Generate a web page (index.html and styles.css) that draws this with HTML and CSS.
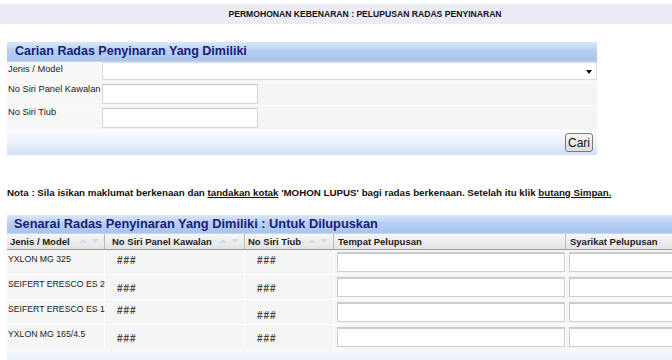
FILE: index.html
```html
<!DOCTYPE html>
<html>
<head>
<meta charset="utf-8">
<link rel="stylesheet" href="styles.css">
</head>
<body>
<div class="title-bar">PERMOHONAN KEBENARAN : PELUPUSAN RADAS PENYINARAN</div>

<section class="panel search">
  <div class="panel-head">Carian Radas Penyinaran Yang Dimiliki</div>
  <div class="form">
    <div class="frow r1">
      <label>Jenis / Model</label>
      <div class="select"><span class="caret"></span></div>
    </div>
    <div class="frow r2">
      <label>No Siri Panel Kawalan</label>
      <input class="tinput" type="text">
    </div>
    <div class="frow r3">
      <label>No Siri Tiub</label>
      <input class="tinput" type="text">
    </div>
  </div>
  <div class="panel-foot"><button class="btn">Cari</button></div>
</section>

<p class="note">Nota : Sila isikan maklumat berkenaan dan <u>tandakan kotak</u> 'MOHON LUPUS' bagi radas berkenaan. Setelah itu klik <u>butang Simpan.</u></p>

<section class="panel list">
  <div class="panel-head">Senarai Radas Penyinaran Yang Dimiliki : Untuk Dilupuskan</div>
  <div class="ghead">
    <div class="th th1">Jenis / Model <span class="sort"><i class="up"></i><i class="down"></i></span></div>
    <div class="th th2">No Siri Panel Kawalan <span class="sort"><i class="up"></i><i class="down"></i></span></div>
    <div class="th th3">No Siri Tiub <span class="sort"><i class="up"></i><i class="down"></i></span></div>
    <div class="th th4">Tempat Pelupusan</div>
    <div class="th th5">Syarikat Pelupusan</div>
  </div>
  <div class="gbody">
    <div class="td model">YXLON MG 325</div>
    <div class="td hash p5">###</div>
    <div class="td hash p5">###</div>
    <div class="td"><input class="cinput" type="text"></div>
    <div class="td"><input class="cinput" type="text"></div>

    <div class="td model">SEIFERT ERESCO ES 2</div>
    <div class="td hash p9">###</div>
    <div class="td hash p9">###</div>
    <div class="td"><input class="cinput" type="text"></div>
    <div class="td"><input class="cinput" type="text"></div>

    <div class="td model">SEIFERT ERESCO ES 1</div>
    <div class="td hash p5">###</div>
    <div class="td hash p10">###</div>
    <div class="td"><input class="cinput" type="text"></div>
    <div class="td"><input class="cinput" type="text"></div>

    <div class="td model">YXLON MG 165/4.5</div>
    <div class="td hash p8">###</div>
    <div class="td hash p9">###</div>
    <div class="td"><input class="cinput" type="text"></div>
    <div class="td"><input class="cinput" type="text"></div>
  </div>
  <div class="list-foot"></div>
</section>
</body>
</html>
```

FILE: styles.css
```css
html, body {
  margin: 0;
  padding: 0;
  background: #ffffff;
  overflow: hidden;
  width: 672px;
  height: 360px;
}
body {
  font-family: "Liberation Sans", Arial, sans-serif;
  font-size: 9.5px;
  line-height: 11px;
  color: #222;
}
.title-bar {
  margin-top: 4px;
  height: 20px;
  line-height: 20px;
  background: #ececf7;
  text-align: center;
  padding-left: 58px;
  font-weight: bold;
  font-size: 8.6px;
  color: #111;
}
.panel {
  margin-left: 7px;
}
.search {
  width: 590px;
  margin-top: 18px;
}
.panel-head {
  height: 19px;
  line-height: 19px;
  padding-left: 8px;
  font-weight: bold;
  font-size: 12.5px;
  color: #17207a;
  background: linear-gradient(#dbe7f8, #b8cff1 45%, #a9c5ee);
  border-bottom: 1px solid #c5d6ef;
}
.form {
  display: flex;
  flex-direction: column;
}
.frow {
  display: grid;
  grid-template-columns: 95px 1fr;
  align-items: start;
  background: #f5f5f5;
  border-bottom: 1px solid #fbfbfb;
}
.frow label {
  padding-left: 1px;
  white-space: nowrap;
  font-size: 9.3px;
  background: #f8f8f8;
  align-self: stretch;
}
.r1 { height: 20px; }
.r2 { height: 22px; }
.r3 { height: 23px; }
.r1 label { padding-top: 2px; }
.r2 label { padding-top: 1px; }
.r3 label { padding-top: 1px; }
.select {
  position: relative;
  height: 18px;
  box-sizing: border-box;
  background: #fff;
  border: 1px solid #dcdcdc;
}
.caret {
  position: absolute;
  right: 4px;
  top: 7px;
  width: 0;
  height: 0;
  border-left: 3px solid transparent;
  border-right: 3px solid transparent;
  border-top: 4px solid #111;
}
.tinput {
  display: block;
  margin: 1px 0 0 0;
  width: 156px;
  height: 20px;
  box-sizing: border-box;
  border: 1px solid #d6d6d6;
  border-top-color: #c8c8c8;
  background: #fff;
  padding: 0;
}
.r3 .tinput { margin-top: 2px; }
.panel-foot {
  height: 25px;
  display: flex;
  justify-content: flex-end;
  align-items: center;
  padding-right: 4px;
  background: linear-gradient(#fafcff, #e9f0fb 55%, #d0dff5);
}
.btn {
  font-family: "Liberation Sans", Arial, sans-serif;
  font-size: 12px;
  height: 19px;
  padding: 0 2px;
  color: #111;
  background: linear-gradient(#f6f6f6, #dedede);
  border: 1px solid #7a7a7a;
  border-radius: 3px;
}
.note {
  margin: 32px 0 0 7px;
  font-weight: bold;
  font-size: 9.75px;
  line-height: 11px;
  color: #111;
  white-space: nowrap;
}
.list {
  margin-top: 17px;
  width: 740px;
}
.list .panel-head {
  height: 18px;
  line-height: 18px;
  padding-left: 7px;
  font-size: 12.8px;
}
.ghead, .gbody {
  display: grid;
  grid-template-columns: 97px 139px 88px 231px 200px;
  column-gap: 1px;
}
.ghead {
  background: #bdbdbd;
  border-bottom: 1px solid #9d9d9d;
}
.th {
  position: relative;
  height: 15px;
  line-height: 15px;
  padding-left: 4px;
  font-weight: bold;
  font-size: 9.5px;
  color: #222;
  background: linear-gradient(#f8f8f8, #e3e3e3);
  white-space: nowrap;
}
.th1 { padding-left: 3px; }
.th2 { padding-left: 7px; }
.th3 { padding-left: 3px; }
.sort {
  position: absolute;
  right: 5px;
  top: 5px;
  display: flex;
  gap: 4px;
}
.sort i {
  display: block;
  width: 0;
  height: 0;
  border-left: 4px solid transparent;
  border-right: 4px solid transparent;
}
.sort .up { border-bottom: 4px solid #d3dbe8; }
.sort .down { border-top: 4px solid #d3dbe8; }
.gbody {
  grid-auto-rows: 24px;
  row-gap: 1px;
  background: #fdfdfd;
}
.td {
  background: #f5f5f5;
  overflow: hidden;
  color: #222;
}
.model {
  overflow: visible;
  padding: 4px 0 0 1px;
  font-size: 8.7px;
  white-space: nowrap;
}
.hash {
  font-weight: bold;
  font-size: 10px;
  color: #444;
  letter-spacing: 1px;
  padding-left: 12px;
}
.p5 { padding-top: 5px; }
.p8 { padding-top: 8px; }
.p9 { padding-top: 8px; }
.p10 { padding-top: 10px; }
.cinput {
  display: block;
  margin: 2px 0 0 3px;
  width: 228px;
  height: 20px;
  box-sizing: border-box;
  border: 1px solid #cfcfcf;
  border-top: 2px solid #cdcdcd;
  background: #fff;
  padding: 0;
}
.gbody .td:nth-child(5n) .cinput { width: 196px; }
.list-foot {
  height: 14px;
  background: linear-gradient(#f7f9fd, #e6eef9);
}
```
